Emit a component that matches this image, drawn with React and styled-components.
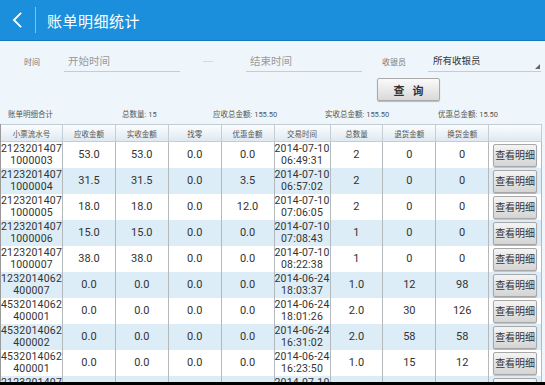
import React from "react";
import styled, { createGlobalStyle } from "styled-components";

const GlobalStyle = createGlobalStyle`
  html, body {
    margin: 0;
    padding: 0;
    background: #eef6fc;
    font-family: Roboto, "Noto Sans CJK SC", sans-serif;
  }
`;

const headers = [
  "小票流水号",
  "应收金额",
  "实收金额",
  "找零",
  "优惠金额",
  "交易时间",
  "总数量",
  "退货金额",
  "换货金额",
  "",
];

const rows = [
  ["2123201407", "1000003", "53.0", "53.0", "0.0", "0.0", "2014-07-10", "06:49:31", "2", "0", "0"],
  ["2123201407", "1000004", "31.5", "31.5", "0.0", "3.5", "2014-07-10", "06:57:02", "2", "0", "0"],
  ["2123201407", "1000005", "18.0", "18.0", "0.0", "12.0", "2014-07-10", "07:06:05", "2", "0", "0"],
  ["2123201407", "1000006", "15.0", "15.0", "0.0", "0.0", "2014-07-10", "07:08:43", "1", "0", "0"],
  ["2123201407", "1000007", "38.0", "38.0", "0.0", "0.0", "2014-07-10", "08:22:38", "1", "0", "0"],
  ["1232014062", "400007", "0.0", "0.0", "0.0", "0.0", "2014-06-24", "18:03:37", "1.0", "12", "98"],
  ["4532014062", "400001", "0.0", "0.0", "0.0", "0.0", "2014-06-24", "18:01:26", "2.0", "30", "126"],
  ["4532014062", "400002", "0.0", "0.0", "0.0", "0.0", "2014-06-24", "16:31:02", "2.0", "58", "58"],
  ["4532014062", "400001", "0.0", "0.0", "0.0", "0.0", "2014-06-24", "16:23:50", "1.0", "15", "12"],
  ["2123201407", "1000008", "0.0", "0.0", "0.0", "0.0", "2014-07-10", "08:30:11", "1", "0", "0"],
];

export default function App() {
  return (
    <>
      <GlobalStyle />
      <Screen>
        <TopBar>
          <BackIcon viewBox="0 0 12 20">
            <path d="M10 2 L2 10 L10 18" fill="none" stroke="#fff" strokeWidth="2" />
          </BackIcon>
          <Divider />
          <Title>账单明细统计</Title>
        </TopBar>

        <FilterRow>
          <Label>时间</Label>
          <Field $width={116}>
            <Placeholder>开始时间</Placeholder>
          </Field>
          <Dash>----</Dash>
          <Field $width={116}>
            <Placeholder>结束时间</Placeholder>
          </Field>
          <Label $left={20}>收银员</Label>
          <Select>
            <SelectText>所有收银员</SelectText>
            <Corner />
          </Select>
        </FilterRow>

        <ButtonRow>
          <QueryButton>查&nbsp;&nbsp;&nbsp;询</QueryButton>
        </ButtonRow>

        <Summary>
          <SumItem $width={114}>账单明细合计</SumItem>
          <SumItem $width={91}>总数量: 15</SumItem>
          <SumItem $width={112}>应收总金额: 155.50</SumItem>
          <SumItem $width={113}>实收总金额: 155.50</SumItem>
          <SumItem>优惠总金额: 15.50</SumItem>
        </Summary>

        <TableArea>
          <Grid>
            {headers.map((h, i) => (
              <HeadCell key={i}>{h}</HeadCell>
            ))}
            {rows.map((r, i) => (
              <React.Fragment key={i}>
                <Cell $alt={i % 2 === 1} $tight>
                  {r[0]}
                  <br />
                  {r[1]}
                </Cell>
                <Cell $alt={i % 2 === 1}>{r[2]}</Cell>
                <Cell $alt={i % 2 === 1}>{r[3]}</Cell>
                <Cell $alt={i % 2 === 1}>{r[4]}</Cell>
                <Cell $alt={i % 2 === 1}>{r[5]}</Cell>
                <Cell $alt={i % 2 === 1} $tight>
                  {r[6]}
                  <br />
                  {r[7]}
                </Cell>
                <Cell $alt={i % 2 === 1}>{r[8]}</Cell>
                <Cell $alt={i % 2 === 1}>{r[9]}</Cell>
                <Cell $alt={i % 2 === 1}>{r[10]}</Cell>
                <ButtonCell $alt={i % 2 === 1}>
                  <DetailButton>查看明细</DetailButton>
                </ButtonCell>
              </React.Fragment>
            ))}
          </Grid>
        </TableArea>
        <NavStrip />
      </Screen>
    </>
  );
}

const Screen = styled.div`
  width: 545px;
  height: 385px;
  display: flex;
  flex-direction: column;
  overflow: hidden;
  background: #eef6fc;
`;

const TopBar = styled.div`
  height: 41px;
  flex-shrink: 0;
  background: #1b8fdb;
  border-bottom: 1px solid #1678bb;
  box-sizing: border-box;
  display: flex;
  align-items: center;
`;

const BackIcon = styled.svg`
  width: 11px;
  height: 18px;
  margin-left: 12px;
`;

const Divider = styled.div`
  width: 1px;
  height: 26px;
  background: #7cc2ee;
  margin-left: 12px;
`;

const Title = styled.div`
  color: #fff;
  font-size: 15px;
  margin-left: 11px;
  letter-spacing: 0.5px;
`;

const FilterRow = styled.div`
  display: flex;
  align-items: flex-end;
  height: 31px;
  padding-left: 24px;
  box-sizing: border-box;
`;

const Label = styled.div`
  font-size: 8px;
  color: #777;
  width: 30px;
  margin-left: ${(p) => p.$left || 0}px;
  padding-bottom: 5px;
`;

const Field = styled.div`
  width: ${(p) => p.$width}px;
  margin-left: 10px;
  border-bottom: 1px solid #c4cdd4;
  padding: 0 0 2px 4px;
  box-sizing: border-box;
`;

const Placeholder = styled.span`
  font-size: 10.5px;
  color: #999;
`;

const Dash = styled.div`
  width: 56px;
  text-align: center;
  color: #b0b0b0;
  font-size: 7px;
  letter-spacing: 0.5px;
  padding-bottom: 6px;
`;

const Select = styled.div`
  position: relative;
  width: 113px;
  margin-left: 16px;
  border-bottom: 1px solid #c4cdd4;
  padding: 0 0 3px 5px;
  box-sizing: border-box;
`;

const SelectText = styled.span`
  font-size: 9.5px;
  color: #333;
`;

const Corner = styled.div`
  position: absolute;
  right: 1px;
  bottom: 2px;
  width: 0;
  height: 0;
  border-left: 5px solid transparent;
  border-bottom: 5px solid #666;
`;

const ButtonRow = styled.div`
  display: flex;
  padding-left: 377px;
  margin-top: 6px;
`;

const QueryButton = styled.div`
  width: 63px;
  height: 23px;
  box-sizing: border-box;
  border: 1px solid #a9a9a9;
  border-radius: 2px;
  background: linear-gradient(#fafafa, #d9d9d9);
  box-shadow: 0 1px 1px rgba(0, 0, 0, 0.25);
  display: flex;
  align-items: center;
  justify-content: center;
  font-size: 11px;
  font-weight: bold;
  color: #333;
`;

const Summary = styled.div`
  display: flex;
  padding-left: 8px;
  margin-top: 6px;
  height: 12px;
  align-items: center;
`;

const SumItem = styled.div`
  width: ${(p) => (p.$width ? `${p.$width}px` : "auto")};
  font-size: 7.5px;
  color: #555;
  white-space: nowrap;
`;

const TableArea = styled.div`
  flex: 1;
  overflow: hidden;
  margin-top: 5px;
`;

const Grid = styled.div`
  width: 542px;
  display: grid;
  grid-template-columns: repeat(10, 1fr);
  grid-template-rows: 18px;
  grid-auto-rows: 26px;
  border-left: 1px solid #9a9a9a;
  box-sizing: border-box;
`;

const HeadCell = styled.div`
  background: linear-gradient(#fbfdfe, #dfe9f1);
  border: 1px solid #c3cdd5;
  border-left: none;
  box-sizing: border-box;
  display: flex;
  align-items: center;
  justify-content: center;
  font-size: 7.5px;
  color: #555;
`;

const Cell = styled.div`
  background: ${(p) => (p.$alt ? "#dcedf8" : "#ffffff")};
  border-right: 1px solid #b4b9bd;
  box-sizing: border-box;
  display: flex;
  align-items: center;
  justify-content: center;
  text-align: center;
  font-size: ${(p) => (p.$tight ? "10.5px" : "11px")};
  line-height: ${(p) => (p.$tight ? "12.5px" : "14px")};
  color: #333;
  white-space: nowrap;
  letter-spacing: ${(p) => (p.$tight ? "0.2px" : "0")};
`;

const ButtonCell = styled(Cell)`
  padding: 1px 0 0 4px;
  justify-content: flex-start;
`;

const DetailButton = styled.div`
  width: 44px;
  height: 23px;
  box-sizing: border-box;
  border: 1px solid #a8a8a8;
  border-radius: 2px;
  background: linear-gradient(#f4f4f4, #d4d4d4);
  box-shadow: 0 1px 1px rgba(0, 0, 0, 0.25);
  display: flex;
  align-items: center;
  justify-content: center;
  font-size: 10px;
  color: #333;
  white-space: nowrap;
`;

const NavStrip = styled.div`
  height: 3px;
  flex-shrink: 0;
  background: #000;
`;
